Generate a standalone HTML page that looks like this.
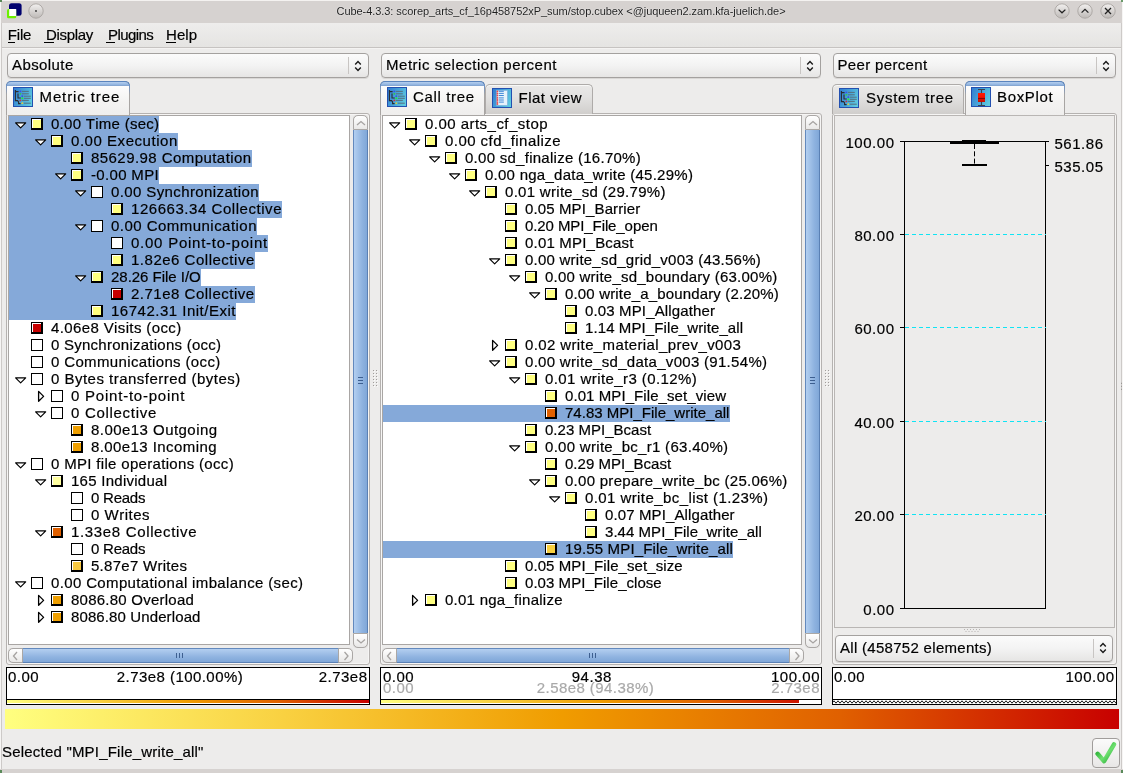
<!DOCTYPE html><html><head><meta charset="utf-8"><style>
html,body{margin:0;padding:0;width:1123px;height:773px;overflow:hidden;background:#edeceb}
body{position:relative;font-family:"Liberation Sans",sans-serif}
span{font-kerning:none;-webkit-text-stroke:0.2px currentColor}
#tx{position:absolute;left:0;top:0;width:1123px;height:773px;will-change:transform}
</style></head><body>














<div style="position:absolute;left:0;top:0;width:1123px;height:773px;background:#edeceb"></div>
<div style="position:absolute;left:0px;top:0px;width:1123px;height:23px;background:#d6d2d0"></div>
<div style="position:absolute;left:0px;top:0px;width:1123px;height:1px;background:#f4f2f0"></div>
<div style="position:absolute;left:0px;top:0px;width:1px;height:773px;background:#f6f5f4"></div>
<div style="position:absolute;left:1px;top:23px;width:1px;height:750px;background:#cdcac8"></div>
<div style="position:absolute;left:1121px;top:23px;width:1px;height:750px;background:#cdcac8"></div>
<div style="position:absolute;left:1122px;top:0px;width:1px;height:773px;background:#f6f5f4"></div>
<div style="position:absolute;left:0px;top:769px;width:1123px;height:4px;background:#d6d2d0"></div>
<div style="position:absolute;left:0px;top:770px;width:2px;height:3px;background:#5a8a5a"></div>
<div style="position:absolute;left:0px;top:0px;width:2px;height:2px;background:#5a8a5a"></div>
<div style="position:absolute;left:1121px;top:770px;width:2px;height:3px;background:#5a8a5a"></div>
<div style="position:absolute;left:1121px;top:0px;width:2px;height:2px;background:#6a9a6a"></div>
<svg style="position:absolute;left:5px;top:2px" width="18" height="18"><rect x="4" y="1.2" width="12.6" height="12.6" rx="2.5" fill="#00006e"/><rect x="2" y="7" width="9.2" height="9.2" rx="1.5" fill="#6cf000"/><rect x="4.2" y="7" width="7" height="7" fill="#fff"/></svg>
<svg style="position:absolute;left:27.4px;top:1.5999999999999996px" width="18" height="18"><defs><linearGradient id="g36" x1="0" y1="0" x2="0" y2="1"><stop offset="0" stop-color="#f2f0ef"/><stop offset="1" stop-color="#bdb9b6"/></linearGradient></defs><circle cx="9" cy="9" r="7.2" fill="url(#g36)" stroke="#a9a5a2" stroke-width="0.9"/><circle cx="9" cy="9" r="0.9" fill="#333"/></svg>
<svg style="position:absolute;left:1053.4px;top:1.5999999999999996px" width="18" height="18"><defs><linearGradient id="g1062" x1="0" y1="0" x2="0" y2="1"><stop offset="0" stop-color="#f2f0ef"/><stop offset="1" stop-color="#bdb9b6"/></linearGradient></defs><circle cx="9" cy="9" r="7.2" fill="url(#g1062)" stroke="#a9a5a2" stroke-width="0.9"/><path d="M5.6 7.6 L9 10.8 L12.4 7.6" fill="none" stroke="#222" stroke-width="1.3"/></svg>
<svg style="position:absolute;left:1076.4px;top:1.5999999999999996px" width="18" height="18"><defs><linearGradient id="g1085" x1="0" y1="0" x2="0" y2="1"><stop offset="0" stop-color="#f2f0ef"/><stop offset="1" stop-color="#bdb9b6"/></linearGradient></defs><circle cx="9" cy="9" r="7.2" fill="url(#g1085)" stroke="#a9a5a2" stroke-width="0.9"/><path d="M5.6 10.6 L9 7.4 L12.4 10.6" fill="none" stroke="#222" stroke-width="1.3"/></svg>
<svg style="position:absolute;left:1099.4px;top:1.5999999999999996px" width="18" height="18"><defs><linearGradient id="g1108" x1="0" y1="0" x2="0" y2="1"><stop offset="0" stop-color="#f2f0ef"/><stop offset="1" stop-color="#bdb9b6"/></linearGradient></defs><circle cx="9" cy="9" r="7.2" fill="url(#g1108)" stroke="#a9a5a2" stroke-width="0.9"/><path d="M6 6 L12 12 M12 6 L6 12" fill="none" stroke="#222" stroke-width="1.3"/></svg>
<div style="position:absolute;left:2px;top:23px;width:1119px;height:24px;background:linear-gradient(#eeedec,#e5e4e2)"></div>
<div style="position:absolute;left:2px;top:47px;width:1119px;height:1px;background:#c6c3c1"></div>
<div style="position:absolute;left:2px;top:48px;width:1119px;height:1px;background:#f4f3f2"></div>
<div style="position:absolute;left:8px;top:42px;width:7px;height:1px;background:#000"></div>
<div style="position:absolute;left:44px;top:42px;width:10px;height:1px;background:#000"></div>
<div style="position:absolute;left:106px;top:42px;width:9px;height:1px;background:#000"></div>
<div style="position:absolute;left:166px;top:42px;width:10px;height:1px;background:#000"></div>
<div style="position:absolute;left:7px;top:53px;width:360px;height:23px;border:1px solid #a4a19f;border-radius:4px;background:linear-gradient(#fbfbfb,#f3f3f3 50%,#e6e5e4);box-shadow:0 1px 0 #d9d7d5"></div>
<div style="position:absolute;left:348px;top:57px;width:1px;height:17px;background:#c8c5c3"></div>
<svg style="position:absolute;left:353px;top:60px" width="10" height="12"><path d="M2.2 4.4 L5 1.6 L7.8 4.4 M2.2 7.6 L5 10.4 L7.8 7.6" fill="none" stroke="#1a1a1a" stroke-width="1.45"/></svg>
<div style="position:absolute;left:381px;top:53px;width:438px;height:23px;border:1px solid #a4a19f;border-radius:4px;background:linear-gradient(#fbfbfb,#f3f3f3 50%,#e6e5e4);box-shadow:0 1px 0 #d9d7d5"></div>
<div style="position:absolute;left:800px;top:57px;width:1px;height:17px;background:#c8c5c3"></div>
<svg style="position:absolute;left:805px;top:60px" width="10" height="12"><path d="M2.2 4.4 L5 1.6 L7.8 4.4 M2.2 7.6 L5 10.4 L7.8 7.6" fill="none" stroke="#1a1a1a" stroke-width="1.45"/></svg>
<div style="position:absolute;left:833px;top:53px;width:281px;height:23px;border:1px solid #a4a19f;border-radius:4px;background:linear-gradient(#fbfbfb,#f3f3f3 50%,#e6e5e4);box-shadow:0 1px 0 #d9d7d5"></div>
<div style="position:absolute;left:1096px;top:57px;width:1px;height:17px;background:#c8c5c3"></div>
<svg style="position:absolute;left:1101px;top:60px" width="10" height="12"><path d="M2.2 4.4 L5 1.6 L7.8 4.4 M2.2 7.6 L5 10.4 L7.8 7.6" fill="none" stroke="#1a1a1a" stroke-width="1.45"/></svg>
<div style="position:absolute;left:6px;top:113px;width:362px;height:550px;border:1px solid #b5b2b0;border-radius:3px;box-shadow:inset 0 0 0 1px #f6f5f4"></div>
<div style="position:absolute;left:380px;top:113px;width:440px;height:550px;border:1px solid #b5b2b0;border-radius:3px;box-shadow:inset 0 0 0 1px #f6f5f4"></div>
<div style="position:absolute;left:832px;top:113px;width:283px;height:550px;border:1px solid #b5b2b0;border-radius:3px;box-shadow:inset 0 0 0 1px #f6f5f4"></div>
<div style="position:absolute;left:6px;top:81px;width:122px;height:33px;border:1px solid #a8a5a3;border-bottom:none;border-radius:5px 5px 0 0;background:linear-gradient(#ffffff,#f4f3f2 60%,#efeeed)"></div>
<div style="position:absolute;left:6px;top:81px;width:122px;height:3px;border:1px solid #5a84bd;border-bottom-color:#86a7d2;border-radius:5px 5px 0 0;background:linear-gradient(#b5cfee,#8db1df)"></div>
<div style="position:absolute;left:6px;top:85px;width:1px;height:10px;background:linear-gradient(#6a90c6,#a8a5a3)"></div>
<div style="position:absolute;left:129px;top:85px;width:1px;height:10px;background:linear-gradient(#6a90c6,#a8a5a3)"></div>
<svg style="position:absolute;left:13px;top:87px" width="20" height="20"><defs><linearGradient id="it13" x1="0" y1="0.3" x2="1" y2="0.7"><stop offset="0" stop-color="#3482d2"/><stop offset="1" stop-color="#5fcbe0"/></linearGradient></defs>
<rect x="0.5" y="0.5" width="19" height="19" fill="url(#it13)" stroke="#2350b0"/>
<path d="M2.4 3 V13.6 H4.6 L5.6 15 V16.6 H7.6 M2.4 4.6 H5.6 M5 6.6 V11 H7.8" fill="none" stroke="#2b2b30" stroke-width="1.1"/>
<path d="M8.8 4.4 H15.8 M8.8 6.8 H15.8 M10.8 9.2 H17.8 M10.8 11.3 H17.8 M8.8 13.4 H15.8 M10.8 16.2 H17.8" stroke="#56707e" stroke-width="1"/>
<circle cx="7.3" cy="4.4" r="0.9" fill="#3a50e8"/><circle cx="7.3" cy="6.8" r="0.9" fill="#30d040"/><circle cx="9.3" cy="9.2" r="0.9" fill="#3a50e8"/><circle cx="9.3" cy="11.3" r="1" fill="#20f030"/><circle cx="7.3" cy="13.4" r="0.9" fill="#d03040"/><circle cx="9.3" cy="16.2" r="0.9" fill="#e0d030"/></svg>
<div style="position:absolute;left:380px;top:81px;width:103px;height:33px;border:1px solid #a8a5a3;border-bottom:none;border-radius:5px 5px 0 0;background:linear-gradient(#ffffff,#f4f3f2 60%,#efeeed)"></div>
<div style="position:absolute;left:380px;top:81px;width:103px;height:3px;border:1px solid #5a84bd;border-bottom-color:#86a7d2;border-radius:5px 5px 0 0;background:linear-gradient(#b5cfee,#8db1df)"></div>
<div style="position:absolute;left:380px;top:85px;width:1px;height:10px;background:linear-gradient(#6a90c6,#a8a5a3)"></div>
<div style="position:absolute;left:484px;top:85px;width:1px;height:10px;background:linear-gradient(#6a90c6,#a8a5a3)"></div>
<svg style="position:absolute;left:387px;top:87px" width="20" height="20"><defs><linearGradient id="it387" x1="0" y1="0.3" x2="1" y2="0.7"><stop offset="0" stop-color="#3482d2"/><stop offset="1" stop-color="#5fcbe0"/></linearGradient></defs>
<rect x="0.5" y="0.5" width="19" height="19" fill="url(#it387)" stroke="#2350b0"/>
<path d="M2.4 3 V13.6 H4.6 L5.6 15 V16.6 H7.6 M2.4 4.6 H5.6 M5 6.6 V11 H7.8" fill="none" stroke="#2b2b30" stroke-width="1.1"/>
<path d="M8.8 4.4 H15.8 M8.8 6.8 H15.8 M10.8 9.2 H17.8 M10.8 11.3 H17.8 M8.8 13.4 H15.8 M10.8 16.2 H17.8" stroke="#56707e" stroke-width="1"/>
<circle cx="7.3" cy="4.4" r="0.9" fill="#3a50e8"/><circle cx="7.3" cy="6.8" r="0.9" fill="#30d040"/><circle cx="9.3" cy="9.2" r="0.9" fill="#3a50e8"/><circle cx="9.3" cy="11.3" r="1" fill="#20f030"/><circle cx="7.3" cy="13.4" r="0.9" fill="#d03040"/><circle cx="9.3" cy="16.2" r="0.9" fill="#e0d030"/></svg>
<div style="position:absolute;left:485px;top:84px;width:106px;height:29px;border:1px solid #aeaba9;border-bottom:none;border-radius:5px 5px 0 0;background:linear-gradient(#e9e8e7,#e3e2e1 40%,#d0cecc);box-shadow:inset 0 1px 0 #f8f8f7"></div>
<svg style="position:absolute;left:492px;top:88px" width="20" height="20"><defs><linearGradient id="if492" x1="0" y1="0.3" x2="1" y2="0.7"><stop offset="0" stop-color="#3482d2"/><stop offset="1" stop-color="#5fcbe0"/></linearGradient></defs>
<rect x="0.5" y="0.5" width="19" height="19" fill="url(#if492)" stroke="#2350b0"/>
<rect x="4.6" y="2.4" width="10.8" height="15" fill="#e6f2fb" stroke="#7fb0de" stroke-width="0.6"/>
<path d="M6.8 3.3 H11.8 M6.8 5.4 H11.8 M6.8 7.5 H11.8 M6.8 9.9 H11.8 M6.8 12 H11.8 M6.8 14.1 H11.8" stroke="#3f88d8" stroke-width="1"/>
<g fill="#f04848"><circle cx="5.4" cy="3.3" r="0.9"/><circle cx="5.4" cy="5.4" r="0.9"/><circle cx="5.4" cy="7.5" r="0.9"/><circle cx="5.4" cy="9.9" r="0.9"/><circle cx="5.4" cy="12" r="0.9"/><circle cx="5.4" cy="14.1" r="0.9"/><circle cx="5.4" cy="16" r="0.9"/></g></svg>
<div style="position:absolute;left:832px;top:84px;width:130px;height:29px;border:1px solid #aeaba9;border-bottom:none;border-radius:5px 5px 0 0;background:linear-gradient(#e9e8e7,#e3e2e1 40%,#d0cecc);box-shadow:inset 0 1px 0 #f8f8f7"></div>
<svg style="position:absolute;left:839px;top:88px" width="20" height="20"><defs><linearGradient id="it839" x1="0" y1="0.3" x2="1" y2="0.7"><stop offset="0" stop-color="#3482d2"/><stop offset="1" stop-color="#5fcbe0"/></linearGradient></defs>
<rect x="0.5" y="0.5" width="19" height="19" fill="url(#it839)" stroke="#2350b0"/>
<path d="M2.4 3 V13.6 H4.6 L5.6 15 V16.6 H7.6 M2.4 4.6 H5.6 M5 6.6 V11 H7.8" fill="none" stroke="#2b2b30" stroke-width="1.1"/>
<path d="M8.8 4.4 H15.8 M8.8 6.8 H15.8 M10.8 9.2 H17.8 M10.8 11.3 H17.8 M8.8 13.4 H15.8 M10.8 16.2 H17.8" stroke="#56707e" stroke-width="1"/>
<circle cx="7.3" cy="4.4" r="0.9" fill="#3a50e8"/><circle cx="7.3" cy="6.8" r="0.9" fill="#30d040"/><circle cx="9.3" cy="9.2" r="0.9" fill="#3a50e8"/><circle cx="9.3" cy="11.3" r="1" fill="#20f030"/><circle cx="7.3" cy="13.4" r="0.9" fill="#d03040"/><circle cx="9.3" cy="16.2" r="0.9" fill="#e0d030"/></svg>
<div style="position:absolute;left:965px;top:81px;width:98px;height:33px;border:1px solid #a8a5a3;border-bottom:none;border-radius:5px 5px 0 0;background:linear-gradient(#ffffff,#f4f3f2 60%,#efeeed)"></div>
<div style="position:absolute;left:965px;top:81px;width:98px;height:3px;border:1px solid #5a84bd;border-bottom-color:#86a7d2;border-radius:5px 5px 0 0;background:linear-gradient(#b5cfee,#8db1df)"></div>
<div style="position:absolute;left:965px;top:85px;width:1px;height:10px;background:linear-gradient(#6a90c6,#a8a5a3)"></div>
<div style="position:absolute;left:1064px;top:85px;width:1px;height:10px;background:linear-gradient(#6a90c6,#a8a5a3)"></div>
<svg style="position:absolute;left:971px;top:87px" width="20" height="20"><defs><linearGradient id="ib971" x1="0" y1="0.3" x2="1" y2="0.7"><stop offset="0" stop-color="#3482d2"/><stop offset="1" stop-color="#5fcbe0"/></linearGradient><linearGradient id="ibr971" x1="0" y1="0" x2="0" y2="1"><stop offset="0" stop-color="#ff1a00"/><stop offset="0.6" stop-color="#f01000"/><stop offset="1" stop-color="#c01000"/></linearGradient></defs>
<rect x="0.5" y="0.5" width="19" height="19" fill="url(#ib971)" stroke="#2350b0"/>
<path d="M7 2.5 H14 M10.5 2.5 V6 M10.5 15 V18.5 M7 18.5 H14" stroke="#3a4450" stroke-width="1.1"/>
<rect x="7" y="6" width="7" height="9" fill="url(#ibr971)"/>
<path d="M7 11.5 H14" stroke="#8a0800" stroke-width="1.2"/></svg>
<div style="position:absolute;left:8px;top:115px;width:340px;height:528px;border:1px solid #a9a6a4;background:#fff;overflow:hidden"></div>
<div style="position:absolute;left:382px;top:115px;width:418px;height:528px;border:1px solid #a9a6a4;background:#fff;overflow:hidden"></div>
<div style="position:absolute;left:353px;top:115px;width:15px;height:533px;border-radius:4px;background:#dcdad8"></div>
<div style="position:absolute;left:353px;top:130px;width:15px;height:503px;background:linear-gradient(90deg,#6389bd 0,#6389bd 1px,#b3cff0 1px,#8fb3e0 60%,#80a7d8 calc(100% - 1px),#5a80b4 calc(100% - 1px))"></div>
<div style="position:absolute;left:353px;top:115px;width:13px;height:13px;border:1px solid #aaa7a5;border-radius:5px 5px 0 0;background:linear-gradient(#ffffff,#e9e8e7)"></div>
<div style="position:absolute;left:353px;top:633px;width:13px;height:13px;border:1px solid #aaa7a5;border-radius:0 0 5px 5px;background:linear-gradient(#ffffff,#e9e8e7)"></div>
<svg style="position:absolute;left:356px;top:120px" width="10" height="7"><path d="M1 5 L5 1.5 L9 5" fill="none" stroke="#a6a3a1" stroke-width="1.3"/></svg>
<svg style="position:absolute;left:356px;top:638px" width="10" height="7"><path d="M1 1.5 L5 5 L9 1.5" fill="none" stroke="#a6a3a1" stroke-width="1.3"/></svg>
<div style="position:absolute;left:358px;top:377px;width:5px;height:1.4px;background:#3d5f90"></div>
<div style="position:absolute;left:358px;top:380px;width:5px;height:1.4px;background:#3d5f90"></div>
<div style="position:absolute;left:358px;top:383px;width:5px;height:1.4px;background:#3d5f90"></div>
<div style="position:absolute;left:8px;top:648px;width:345px;height:15px;border-radius:4px;background:#dcdad8"></div>
<div style="position:absolute;left:22px;top:648px;width:317px;height:15px;background:linear-gradient(#6389bd 0,#6389bd 1px,#b3cff0 1px,#8fb3e0 60%,#80a7d8 calc(100% - 1px),#5a80b4 calc(100% - 1px))"></div>
<div style="position:absolute;left:8px;top:648px;width:13px;height:13px;border:1px solid #aaa7a5;border-radius:5px 0 0 5px;background:linear-gradient(#ffffff,#e9e8e7)"></div>
<div style="position:absolute;left:338px;top:648px;width:13px;height:13px;border:1px solid #aaa7a5;border-radius:0 5px 5px 0;background:linear-gradient(#ffffff,#e9e8e7)"></div>
<svg style="position:absolute;left:12px;top:651px" width="7" height="10"><path d="M5 1 L1.5 5 L5 9" fill="none" stroke="#a6a3a1" stroke-width="1.3"/></svg>
<svg style="position:absolute;left:343px;top:651px" width="7" height="10"><path d="M1.5 1 L5 5 L1.5 9" fill="none" stroke="#a6a3a1" stroke-width="1.3"/></svg>
<div style="position:absolute;left:176px;top:653px;width:1.4px;height:5px;background:#3d5f90"></div>
<div style="position:absolute;left:179px;top:653px;width:1.4px;height:5px;background:#3d5f90"></div>
<div style="position:absolute;left:182px;top:653px;width:1.4px;height:5px;background:#3d5f90"></div>
<div style="position:absolute;left:805px;top:115px;width:15px;height:533px;border-radius:4px;background:#dcdad8"></div>
<div style="position:absolute;left:805px;top:130px;width:15px;height:503px;background:linear-gradient(90deg,#6389bd 0,#6389bd 1px,#b3cff0 1px,#8fb3e0 60%,#80a7d8 calc(100% - 1px),#5a80b4 calc(100% - 1px))"></div>
<div style="position:absolute;left:805px;top:115px;width:13px;height:13px;border:1px solid #aaa7a5;border-radius:5px 5px 0 0;background:linear-gradient(#ffffff,#e9e8e7)"></div>
<div style="position:absolute;left:805px;top:633px;width:13px;height:13px;border:1px solid #aaa7a5;border-radius:0 0 5px 5px;background:linear-gradient(#ffffff,#e9e8e7)"></div>
<svg style="position:absolute;left:808px;top:120px" width="10" height="7"><path d="M1 5 L5 1.5 L9 5" fill="none" stroke="#a6a3a1" stroke-width="1.3"/></svg>
<svg style="position:absolute;left:808px;top:638px" width="10" height="7"><path d="M1 1.5 L5 5 L9 1.5" fill="none" stroke="#a6a3a1" stroke-width="1.3"/></svg>
<div style="position:absolute;left:810px;top:377px;width:5px;height:1.4px;background:#3d5f90"></div>
<div style="position:absolute;left:810px;top:380px;width:5px;height:1.4px;background:#3d5f90"></div>
<div style="position:absolute;left:810px;top:383px;width:5px;height:1.4px;background:#3d5f90"></div>
<div style="position:absolute;left:382px;top:648px;width:422px;height:15px;border-radius:4px;background:#dcdad8"></div>
<div style="position:absolute;left:396px;top:648px;width:394px;height:15px;background:linear-gradient(#6389bd 0,#6389bd 1px,#b3cff0 1px,#8fb3e0 60%,#80a7d8 calc(100% - 1px),#5a80b4 calc(100% - 1px))"></div>
<div style="position:absolute;left:382px;top:648px;width:13px;height:13px;border:1px solid #aaa7a5;border-radius:5px 0 0 5px;background:linear-gradient(#ffffff,#e9e8e7)"></div>
<div style="position:absolute;left:789px;top:648px;width:13px;height:13px;border:1px solid #aaa7a5;border-radius:0 5px 5px 0;background:linear-gradient(#ffffff,#e9e8e7)"></div>
<svg style="position:absolute;left:386px;top:651px" width="7" height="10"><path d="M5 1 L1.5 5 L5 9" fill="none" stroke="#a6a3a1" stroke-width="1.3"/></svg>
<svg style="position:absolute;left:794px;top:651px" width="7" height="10"><path d="M1.5 1 L5 5 L1.5 9" fill="none" stroke="#a6a3a1" stroke-width="1.3"/></svg>
<div style="position:absolute;left:589px;top:653px;width:1.4px;height:5px;background:#3d5f90"></div>
<div style="position:absolute;left:592px;top:653px;width:1.4px;height:5px;background:#3d5f90"></div>
<div style="position:absolute;left:595px;top:653px;width:1.4px;height:5px;background:#3d5f90"></div>
<div style="position:absolute;left:834px;top:115px;width:279px;height:511px;border:1px solid #b9b6b4;background:#edeceb"></div>
<div style="position:absolute;left:904px;top:141px;width:1px;height:468px;background:#000"></div>
<div style="position:absolute;left:1045px;top:141px;width:1px;height:468px;background:#000"></div>
<div style="position:absolute;left:904px;top:141px;width:142px;height:1px;background:#000"></div>
<div style="position:absolute;left:904px;top:608px;width:142px;height:1px;background:#000"></div>
<div style="position:absolute;left:900px;top:141px;width:4px;height:1px;background:#000"></div>
<div style="position:absolute;left:900px;top:234px;width:4px;height:1px;background:#000"></div>
<svg style="position:absolute;left:905px;top:234px" width="141" height="1"><path d="M0 0.5 H141" stroke="#10e4f4" stroke-width="1" stroke-dasharray="4 3"/></svg>
<div style="position:absolute;left:900px;top:327px;width:4px;height:1px;background:#000"></div>
<svg style="position:absolute;left:905px;top:327px" width="141" height="1"><path d="M0 0.5 H141" stroke="#10e4f4" stroke-width="1" stroke-dasharray="4 3"/></svg>
<div style="position:absolute;left:900px;top:421px;width:4px;height:1px;background:#000"></div>
<svg style="position:absolute;left:905px;top:421px" width="141" height="1"><path d="M0 0.5 H141" stroke="#10e4f4" stroke-width="1" stroke-dasharray="4 3"/></svg>
<div style="position:absolute;left:900px;top:514px;width:4px;height:1px;background:#000"></div>
<svg style="position:absolute;left:905px;top:514px" width="141" height="1"><path d="M0 0.5 H141" stroke="#10e4f4" stroke-width="1" stroke-dasharray="4 3"/></svg>
<div style="position:absolute;left:900px;top:608px;width:4px;height:1px;background:#000"></div>
<div style="position:absolute;left:1046px;top:141px;width:3px;height:1px;background:#000"></div>
<div style="position:absolute;left:1046px;top:165px;width:3px;height:1px;background:#000"></div>
<div style="position:absolute;left:950px;top:141px;width:49px;height:3px;background:#000"></div>
<div style="position:absolute;left:962px;top:140px;width:24px;height:1px;background:#000"></div>
<svg style="position:absolute;left:974px;top:144px" width="1" height="21"><path d="M0.5 0 V21" stroke="#000" stroke-width="1" stroke-dasharray="5 2.3"/></svg>
<div style="position:absolute;left:962px;top:164px;width:25px;height:2px;background:#000"></div>
<svg style="position:absolute;left:964px;top:629px" width="20" height="4"><g fill="#b8b5b3"><rect x="0" y="0" width="1" height="1"/><rect x="3" y="0" width="1" height="1"/><rect x="6" y="0" width="1" height="1"/><rect x="9" y="0" width="1" height="1"/><rect x="12" y="0" width="1" height="1"/><rect x="15" y="0" width="1" height="1"/><rect x="1.5" y="2" width="1" height="1"/><rect x="4.5" y="2" width="1" height="1"/><rect x="7.5" y="2" width="1" height="1"/><rect x="10.5" y="2" width="1" height="1"/><rect x="13.5" y="2" width="1" height="1"/></g></svg>
<div style="position:absolute;left:835px;top:635px;width:276px;height:25px;border:1px solid #a4a19f;border-radius:4px;background:linear-gradient(#fbfbfb,#f3f3f3 50%,#e6e5e4);box-shadow:0 1px 0 #d9d7d5"></div>
<div style="position:absolute;left:1093px;top:639px;width:1px;height:19px;background:#c8c5c3"></div>
<svg style="position:absolute;left:1098px;top:642px" width="10" height="12"><path d="M2.2 4.4 L5 1.6 L7.8 4.4 M2.2 7.6 L5 10.4 L7.8 7.6" fill="none" stroke="#1a1a1a" stroke-width="1.45"/></svg>
<svg style="position:absolute;left:373px;top:370px" width="6" height="19"><g fill="#fbfbfa"><rect x="1" y="1" width="1" height="1"/><rect x="4" y="1" width="1" height="1"/><rect x="1" y="4" width="1" height="1"/><rect x="4" y="4" width="1" height="1"/><rect x="1" y="7" width="1" height="1"/><rect x="4" y="7" width="1" height="1"/><rect x="1" y="10" width="1" height="1"/><rect x="4" y="10" width="1" height="1"/><rect x="1" y="13" width="1" height="1"/><rect x="4" y="13" width="1" height="1"/><rect x="1" y="16" width="1" height="1"/><rect x="4" y="16" width="1" height="1"/></g><g fill="#a09d9b"><rect x="0" y="0" width="1" height="1"/><rect x="3" y="0" width="1" height="1"/><rect x="0" y="3" width="1" height="1"/><rect x="3" y="3" width="1" height="1"/><rect x="0" y="6" width="1" height="1"/><rect x="3" y="6" width="1" height="1"/><rect x="0" y="9" width="1" height="1"/><rect x="3" y="9" width="1" height="1"/><rect x="0" y="12" width="1" height="1"/><rect x="3" y="12" width="1" height="1"/><rect x="0" y="15" width="1" height="1"/><rect x="3" y="15" width="1" height="1"/></g></svg>
<svg style="position:absolute;left:825px;top:370px" width="6" height="19"><g fill="#fbfbfa"><rect x="1" y="1" width="1" height="1"/><rect x="4" y="1" width="1" height="1"/><rect x="1" y="4" width="1" height="1"/><rect x="4" y="4" width="1" height="1"/><rect x="1" y="7" width="1" height="1"/><rect x="4" y="7" width="1" height="1"/><rect x="1" y="10" width="1" height="1"/><rect x="4" y="10" width="1" height="1"/><rect x="1" y="13" width="1" height="1"/><rect x="4" y="13" width="1" height="1"/><rect x="1" y="16" width="1" height="1"/><rect x="4" y="16" width="1" height="1"/></g><g fill="#a09d9b"><rect x="0" y="0" width="1" height="1"/><rect x="3" y="0" width="1" height="1"/><rect x="0" y="3" width="1" height="1"/><rect x="3" y="3" width="1" height="1"/><rect x="0" y="6" width="1" height="1"/><rect x="3" y="6" width="1" height="1"/><rect x="0" y="9" width="1" height="1"/><rect x="3" y="9" width="1" height="1"/><rect x="0" y="12" width="1" height="1"/><rect x="3" y="12" width="1" height="1"/><rect x="0" y="15" width="1" height="1"/><rect x="3" y="15" width="1" height="1"/></g></svg>
<svg style="position:absolute;left:1121px;top:382px" width="2" height="10"><g fill="#8d8a88"><rect x="0" y="0.8" width="1" height="1"/><rect x="0" y="3.8" width="1" height="1"/><rect x="0" y="6.8" width="1" height="1"/></g></svg>
<div style="position:absolute;left:6px;top:667px;width:362px;height:36px;border:1px solid #000;background:#fff"></div>
<div style="position:absolute;left:7px;top:699px;width:362px;height:1px;background:#000"></div>
<div style="position:absolute;left:7px;top:700px;width:362px;height:3px;background:linear-gradient(90deg,#ffff80,#f9d141 25%,#f09c00 50%,#e06000 75%,#c80000)"></div>
<div style="position:absolute;left:380px;top:667px;width:440px;height:36px;border:1px solid #000;background:#fff"></div>
<div style="position:absolute;left:381px;top:699px;width:440px;height:1px;background:#000"></div>
<div style="position:absolute;left:381px;top:700px;width:418px;height:3px;overflow:hidden"><div style="width:440px;height:3px;background:linear-gradient(90deg,#ffff80,#f9d141 25%,#f09c00 50%,#e06000 75%,#c80000)"></div></div>
<div style="position:absolute;left:832px;top:667px;width:283px;height:36px;border:1px solid #000;background:#fff"></div>
<div style="position:absolute;left:833px;top:699px;width:283px;height:1px;background:#000"></div>
<svg style="position:absolute;left:833px;top:699px" width="283" height="5"><defs><pattern id="zz" x="1" width="4" height="5" patternUnits="userSpaceOnUse"><path d="M-0.5 1.2 L2 4.2 L4.5 1.2" fill="none" stroke="#000" stroke-width="0.9"/></pattern></defs><rect width="283" height="5" fill="url(#zz)"/></svg>
<div style="position:absolute;left:5px;top:709px;width:1114px;height:20px;background:linear-gradient(90deg,#ffff80,#f9d141 25%,#f09c00 50%,#e06000 75%,#c80000)"></div>
<div style="position:absolute;left:1092px;top:738px;width:26px;height:28px;border:1px solid #a09d9b;border-radius:4px;background:linear-gradient(#fbfbfb,#e8e7e6)"></div>
<svg style="position:absolute;left:1094px;top:740px" width="24" height="26"><defs><linearGradient id="ck" x1="0" y1="0" x2="1" y2="1"><stop offset="0" stop-color="#0a9a1a"/><stop offset="0.55" stop-color="#6ee070"/><stop offset="1" stop-color="#20a830"/></linearGradient></defs><path d="M3.6 13.8 L10.1 21.2 L20 4.4" fill="none" stroke="url(#ck)" stroke-width="4.4" stroke-linecap="round" stroke-linejoin="round"/></svg>
<div style="position:absolute;left:9px;top:116px;width:149.6px;height:17px;background:#85a9d9"></div>
<div style="position:absolute;left:9px;top:133px;width:168.8px;height:17px;background:#85a9d9"></div>
<div style="position:absolute;left:9px;top:150px;width:242.6px;height:17px;background:#85a9d9"></div>
<div style="position:absolute;left:9px;top:167px;width:150.0px;height:17px;background:#85a9d9"></div>
<div style="position:absolute;left:9px;top:184px;width:249.9px;height:17px;background:#85a9d9"></div>
<div style="position:absolute;left:9px;top:201px;width:273.1px;height:17px;background:#85a9d9"></div>
<div style="position:absolute;left:9px;top:218px;width:248.0px;height:17px;background:#85a9d9"></div>
<div style="position:absolute;left:9px;top:235px;width:258.9px;height:17px;background:#85a9d9"></div>
<div style="position:absolute;left:9px;top:252px;width:245.8px;height:17px;background:#85a9d9"></div>
<div style="position:absolute;left:9px;top:269px;width:191.7px;height:17px;background:#85a9d9"></div>
<div style="position:absolute;left:9px;top:286px;width:245.7px;height:17px;background:#85a9d9"></div>
<div style="position:absolute;left:9px;top:303px;width:227.0px;height:17px;background:#85a9d9"></div>
<div style="position:absolute;left:383px;top:405px;width:346.5px;height:17px;background:#85a9d9"></div>
<div style="position:absolute;left:383px;top:541px;width:349.9px;height:17px;background:#85a9d9"></div>
<svg style="position:absolute;left:14px;top:121px" width="14" height="9"><path d="M1.6 1.8 L11.7 1.8 L6.65 6.9 Z" fill="#fff" stroke="#000" stroke-width="1.15" stroke-linejoin="round"/></svg>
<div style="position:absolute;left:31px;top:118px;width:9px;height:9px;background:#ffff80;border-left:1px solid #000;border-top:1px solid #000;border-right:2px solid #000;border-bottom:2px solid #000;box-shadow:inset 1px 1px 0 #fff"></div>
<svg style="position:absolute;left:34px;top:138px" width="14" height="9"><path d="M1.6 1.8 L11.7 1.8 L6.65 6.9 Z" fill="#fff" stroke="#000" stroke-width="1.15" stroke-linejoin="round"/></svg>
<div style="position:absolute;left:51px;top:135px;width:9px;height:9px;background:#ffff80;border-left:1px solid #000;border-top:1px solid #000;border-right:2px solid #000;border-bottom:2px solid #000;box-shadow:inset 1px 1px 0 #fff"></div>
<div style="position:absolute;left:71px;top:152px;width:9px;height:9px;background:#ffff80;border-left:1px solid #000;border-top:1px solid #000;border-right:2px solid #000;border-bottom:2px solid #000;box-shadow:inset 1px 1px 0 #fff"></div>
<svg style="position:absolute;left:54px;top:172px" width="14" height="9"><path d="M1.6 1.8 L11.7 1.8 L6.65 6.9 Z" fill="#fff" stroke="#000" stroke-width="1.15" stroke-linejoin="round"/></svg>
<div style="position:absolute;left:71px;top:169px;width:9px;height:9px;background:#ffff80;border-left:1px solid #000;border-top:1px solid #000;border-right:2px solid #000;border-bottom:2px solid #000;box-shadow:inset 1px 1px 0 #fff"></div>
<svg style="position:absolute;left:74px;top:189px" width="14" height="9"><path d="M1.6 1.8 L11.7 1.8 L6.65 6.9 Z" fill="#fff" stroke="#000" stroke-width="1.15" stroke-linejoin="round"/></svg>
<div style="position:absolute;left:91px;top:186px;width:10px;height:10px;background:#fff;border:1px solid #000"></div>
<div style="position:absolute;left:111px;top:203px;width:9px;height:9px;background:#ffff80;border-left:1px solid #000;border-top:1px solid #000;border-right:2px solid #000;border-bottom:2px solid #000;box-shadow:inset 1px 1px 0 #fff"></div>
<svg style="position:absolute;left:74px;top:223px" width="14" height="9"><path d="M1.6 1.8 L11.7 1.8 L6.65 6.9 Z" fill="#fff" stroke="#000" stroke-width="1.15" stroke-linejoin="round"/></svg>
<div style="position:absolute;left:91px;top:220px;width:10px;height:10px;background:#fff;border:1px solid #000"></div>
<div style="position:absolute;left:111px;top:237px;width:10px;height:10px;background:#fff;border:1px solid #000"></div>
<div style="position:absolute;left:111px;top:254px;width:9px;height:9px;background:#ffff80;border-left:1px solid #000;border-top:1px solid #000;border-right:2px solid #000;border-bottom:2px solid #000;box-shadow:inset 1px 1px 0 #fff"></div>
<svg style="position:absolute;left:74px;top:274px" width="14" height="9"><path d="M1.6 1.8 L11.7 1.8 L6.65 6.9 Z" fill="#fff" stroke="#000" stroke-width="1.15" stroke-linejoin="round"/></svg>
<div style="position:absolute;left:91px;top:271px;width:9px;height:9px;background:#ffff80;border-left:1px solid #000;border-top:1px solid #000;border-right:2px solid #000;border-bottom:2px solid #000;box-shadow:inset 1px 1px 0 #fff"></div>
<div style="position:absolute;left:111px;top:288px;width:9px;height:9px;background:#c80000;border-left:1px solid #000;border-top:1px solid #000;border-right:2px solid #000;border-bottom:2px solid #000;box-shadow:inset 1px 1px 0 #fff"></div>
<div style="position:absolute;left:91px;top:305px;width:9px;height:9px;background:#ffff80;border-left:1px solid #000;border-top:1px solid #000;border-right:2px solid #000;border-bottom:2px solid #000;box-shadow:inset 1px 1px 0 #fff"></div>
<div style="position:absolute;left:31px;top:322px;width:9px;height:9px;background:#c80000;border-left:1px solid #000;border-top:1px solid #000;border-right:2px solid #000;border-bottom:2px solid #000;box-shadow:inset 1px 1px 0 #fff"></div>
<div style="position:absolute;left:31px;top:339px;width:10px;height:10px;background:#fff;border:1px solid #000"></div>
<div style="position:absolute;left:31px;top:356px;width:10px;height:10px;background:#fff;border:1px solid #000"></div>
<svg style="position:absolute;left:14px;top:376px" width="14" height="9"><path d="M1.6 1.8 L11.7 1.8 L6.65 6.9 Z" fill="#fff" stroke="#000" stroke-width="1.15" stroke-linejoin="round"/></svg>
<div style="position:absolute;left:31px;top:373px;width:10px;height:10px;background:#fff;border:1px solid #000"></div>
<svg style="position:absolute;left:37px;top:390px" width="10" height="14"><path d="M1.6 1.4 L1.6 11.3 L6.6 6.35 Z" fill="#fff" stroke="#000" stroke-width="1.3" stroke-linejoin="round"/></svg>
<div style="position:absolute;left:51px;top:390px;width:10px;height:10px;background:#fff;border:1px solid #000"></div>
<svg style="position:absolute;left:34px;top:410px" width="14" height="9"><path d="M1.6 1.8 L11.7 1.8 L6.65 6.9 Z" fill="#fff" stroke="#000" stroke-width="1.15" stroke-linejoin="round"/></svg>
<div style="position:absolute;left:51px;top:407px;width:10px;height:10px;background:#fff;border:1px solid #000"></div>
<div style="position:absolute;left:71px;top:424px;width:9px;height:9px;background:#f0a000;border-left:1px solid #000;border-top:1px solid #000;border-right:2px solid #000;border-bottom:2px solid #000;box-shadow:inset 1px 1px 0 #fff"></div>
<div style="position:absolute;left:71px;top:441px;width:9px;height:9px;background:#f0a000;border-left:1px solid #000;border-top:1px solid #000;border-right:2px solid #000;border-bottom:2px solid #000;box-shadow:inset 1px 1px 0 #fff"></div>
<svg style="position:absolute;left:14px;top:461px" width="14" height="9"><path d="M1.6 1.8 L11.7 1.8 L6.65 6.9 Z" fill="#fff" stroke="#000" stroke-width="1.15" stroke-linejoin="round"/></svg>
<div style="position:absolute;left:31px;top:458px;width:10px;height:10px;background:#fff;border:1px solid #000"></div>
<svg style="position:absolute;left:34px;top:478px" width="14" height="9"><path d="M1.6 1.8 L11.7 1.8 L6.65 6.9 Z" fill="#fff" stroke="#000" stroke-width="1.15" stroke-linejoin="round"/></svg>
<div style="position:absolute;left:51px;top:475px;width:9px;height:9px;background:#ffffa0;border-left:1px solid #000;border-top:1px solid #000;border-right:2px solid #000;border-bottom:2px solid #000;box-shadow:inset 1px 1px 0 #fff"></div>
<div style="position:absolute;left:71px;top:492px;width:10px;height:10px;background:#fff;border:1px solid #000"></div>
<div style="position:absolute;left:71px;top:509px;width:10px;height:10px;background:#fff;border:1px solid #000"></div>
<svg style="position:absolute;left:34px;top:529px" width="14" height="9"><path d="M1.6 1.8 L11.7 1.8 L6.65 6.9 Z" fill="#fff" stroke="#000" stroke-width="1.15" stroke-linejoin="round"/></svg>
<div style="position:absolute;left:51px;top:526px;width:9px;height:9px;background:#e06000;border-left:1px solid #000;border-top:1px solid #000;border-right:2px solid #000;border-bottom:2px solid #000;box-shadow:inset 1px 1px 0 #fff"></div>
<div style="position:absolute;left:71px;top:543px;width:10px;height:10px;background:#fff;border:1px solid #000"></div>
<div style="position:absolute;left:71px;top:560px;width:9px;height:9px;background:#f8c840;border-left:1px solid #000;border-top:1px solid #000;border-right:2px solid #000;border-bottom:2px solid #000;box-shadow:inset 1px 1px 0 #fff"></div>
<svg style="position:absolute;left:14px;top:580px" width="14" height="9"><path d="M1.6 1.8 L11.7 1.8 L6.65 6.9 Z" fill="#fff" stroke="#000" stroke-width="1.15" stroke-linejoin="round"/></svg>
<div style="position:absolute;left:31px;top:577px;width:10px;height:10px;background:#fff;border:1px solid #000"></div>
<svg style="position:absolute;left:37px;top:594px" width="10" height="14"><path d="M1.6 1.4 L1.6 11.3 L6.6 6.35 Z" fill="#fff" stroke="#000" stroke-width="1.3" stroke-linejoin="round"/></svg>
<div style="position:absolute;left:51px;top:594px;width:9px;height:9px;background:#f0a000;border-left:1px solid #000;border-top:1px solid #000;border-right:2px solid #000;border-bottom:2px solid #000;box-shadow:inset 1px 1px 0 #fff"></div>
<svg style="position:absolute;left:37px;top:611px" width="10" height="14"><path d="M1.6 1.4 L1.6 11.3 L6.6 6.35 Z" fill="#fff" stroke="#000" stroke-width="1.3" stroke-linejoin="round"/></svg>
<div style="position:absolute;left:51px;top:611px;width:9px;height:9px;background:#f0a000;border-left:1px solid #000;border-top:1px solid #000;border-right:2px solid #000;border-bottom:2px solid #000;box-shadow:inset 1px 1px 0 #fff"></div>
<svg style="position:absolute;left:388px;top:121px" width="14" height="9"><path d="M1.6 1.8 L11.7 1.8 L6.65 6.9 Z" fill="#fff" stroke="#000" stroke-width="1.15" stroke-linejoin="round"/></svg>
<div style="position:absolute;left:405px;top:118px;width:9px;height:9px;background:#ffff80;border-left:1px solid #000;border-top:1px solid #000;border-right:2px solid #000;border-bottom:2px solid #000;box-shadow:inset 1px 1px 0 #fff"></div>
<svg style="position:absolute;left:408px;top:138px" width="14" height="9"><path d="M1.6 1.8 L11.7 1.8 L6.65 6.9 Z" fill="#fff" stroke="#000" stroke-width="1.15" stroke-linejoin="round"/></svg>
<div style="position:absolute;left:425px;top:135px;width:9px;height:9px;background:#ffff80;border-left:1px solid #000;border-top:1px solid #000;border-right:2px solid #000;border-bottom:2px solid #000;box-shadow:inset 1px 1px 0 #fff"></div>
<svg style="position:absolute;left:428px;top:155px" width="14" height="9"><path d="M1.6 1.8 L11.7 1.8 L6.65 6.9 Z" fill="#fff" stroke="#000" stroke-width="1.15" stroke-linejoin="round"/></svg>
<div style="position:absolute;left:445px;top:152px;width:9px;height:9px;background:#ffff80;border-left:1px solid #000;border-top:1px solid #000;border-right:2px solid #000;border-bottom:2px solid #000;box-shadow:inset 1px 1px 0 #fff"></div>
<svg style="position:absolute;left:448px;top:172px" width="14" height="9"><path d="M1.6 1.8 L11.7 1.8 L6.65 6.9 Z" fill="#fff" stroke="#000" stroke-width="1.15" stroke-linejoin="round"/></svg>
<div style="position:absolute;left:465px;top:169px;width:9px;height:9px;background:#ffff80;border-left:1px solid #000;border-top:1px solid #000;border-right:2px solid #000;border-bottom:2px solid #000;box-shadow:inset 1px 1px 0 #fff"></div>
<svg style="position:absolute;left:468px;top:189px" width="14" height="9"><path d="M1.6 1.8 L11.7 1.8 L6.65 6.9 Z" fill="#fff" stroke="#000" stroke-width="1.15" stroke-linejoin="round"/></svg>
<div style="position:absolute;left:485px;top:186px;width:9px;height:9px;background:#ffff80;border-left:1px solid #000;border-top:1px solid #000;border-right:2px solid #000;border-bottom:2px solid #000;box-shadow:inset 1px 1px 0 #fff"></div>
<div style="position:absolute;left:505px;top:203px;width:9px;height:9px;background:#ffff80;border-left:1px solid #000;border-top:1px solid #000;border-right:2px solid #000;border-bottom:2px solid #000;box-shadow:inset 1px 1px 0 #fff"></div>
<div style="position:absolute;left:505px;top:220px;width:9px;height:9px;background:#ffff80;border-left:1px solid #000;border-top:1px solid #000;border-right:2px solid #000;border-bottom:2px solid #000;box-shadow:inset 1px 1px 0 #fff"></div>
<div style="position:absolute;left:505px;top:237px;width:9px;height:9px;background:#ffff80;border-left:1px solid #000;border-top:1px solid #000;border-right:2px solid #000;border-bottom:2px solid #000;box-shadow:inset 1px 1px 0 #fff"></div>
<svg style="position:absolute;left:488px;top:257px" width="14" height="9"><path d="M1.6 1.8 L11.7 1.8 L6.65 6.9 Z" fill="#fff" stroke="#000" stroke-width="1.15" stroke-linejoin="round"/></svg>
<div style="position:absolute;left:505px;top:254px;width:9px;height:9px;background:#ffff80;border-left:1px solid #000;border-top:1px solid #000;border-right:2px solid #000;border-bottom:2px solid #000;box-shadow:inset 1px 1px 0 #fff"></div>
<svg style="position:absolute;left:508px;top:274px" width="14" height="9"><path d="M1.6 1.8 L11.7 1.8 L6.65 6.9 Z" fill="#fff" stroke="#000" stroke-width="1.15" stroke-linejoin="round"/></svg>
<div style="position:absolute;left:525px;top:271px;width:9px;height:9px;background:#ffff80;border-left:1px solid #000;border-top:1px solid #000;border-right:2px solid #000;border-bottom:2px solid #000;box-shadow:inset 1px 1px 0 #fff"></div>
<svg style="position:absolute;left:528px;top:291px" width="14" height="9"><path d="M1.6 1.8 L11.7 1.8 L6.65 6.9 Z" fill="#fff" stroke="#000" stroke-width="1.15" stroke-linejoin="round"/></svg>
<div style="position:absolute;left:545px;top:288px;width:9px;height:9px;background:#ffff80;border-left:1px solid #000;border-top:1px solid #000;border-right:2px solid #000;border-bottom:2px solid #000;box-shadow:inset 1px 1px 0 #fff"></div>
<div style="position:absolute;left:565px;top:305px;width:9px;height:9px;background:#ffff80;border-left:1px solid #000;border-top:1px solid #000;border-right:2px solid #000;border-bottom:2px solid #000;box-shadow:inset 1px 1px 0 #fff"></div>
<div style="position:absolute;left:565px;top:322px;width:9px;height:9px;background:#ffff80;border-left:1px solid #000;border-top:1px solid #000;border-right:2px solid #000;border-bottom:2px solid #000;box-shadow:inset 1px 1px 0 #fff"></div>
<svg style="position:absolute;left:491px;top:339px" width="10" height="14"><path d="M1.6 1.4 L1.6 11.3 L6.6 6.35 Z" fill="#fff" stroke="#000" stroke-width="1.3" stroke-linejoin="round"/></svg>
<div style="position:absolute;left:505px;top:339px;width:9px;height:9px;background:#ffff80;border-left:1px solid #000;border-top:1px solid #000;border-right:2px solid #000;border-bottom:2px solid #000;box-shadow:inset 1px 1px 0 #fff"></div>
<svg style="position:absolute;left:488px;top:359px" width="14" height="9"><path d="M1.6 1.8 L11.7 1.8 L6.65 6.9 Z" fill="#fff" stroke="#000" stroke-width="1.15" stroke-linejoin="round"/></svg>
<div style="position:absolute;left:505px;top:356px;width:9px;height:9px;background:#ffff80;border-left:1px solid #000;border-top:1px solid #000;border-right:2px solid #000;border-bottom:2px solid #000;box-shadow:inset 1px 1px 0 #fff"></div>
<svg style="position:absolute;left:508px;top:376px" width="14" height="9"><path d="M1.6 1.8 L11.7 1.8 L6.65 6.9 Z" fill="#fff" stroke="#000" stroke-width="1.15" stroke-linejoin="round"/></svg>
<div style="position:absolute;left:525px;top:373px;width:9px;height:9px;background:#ffff80;border-left:1px solid #000;border-top:1px solid #000;border-right:2px solid #000;border-bottom:2px solid #000;box-shadow:inset 1px 1px 0 #fff"></div>
<div style="position:absolute;left:545px;top:390px;width:9px;height:9px;background:#ffff80;border-left:1px solid #000;border-top:1px solid #000;border-right:2px solid #000;border-bottom:2px solid #000;box-shadow:inset 1px 1px 0 #fff"></div>
<div style="position:absolute;left:545px;top:407px;width:9px;height:9px;background:#e06000;border-left:1px solid #000;border-top:1px solid #000;border-right:2px solid #000;border-bottom:2px solid #000;box-shadow:inset 1px 1px 0 #fff"></div>
<div style="position:absolute;left:525px;top:424px;width:9px;height:9px;background:#ffff80;border-left:1px solid #000;border-top:1px solid #000;border-right:2px solid #000;border-bottom:2px solid #000;box-shadow:inset 1px 1px 0 #fff"></div>
<svg style="position:absolute;left:508px;top:444px" width="14" height="9"><path d="M1.6 1.8 L11.7 1.8 L6.65 6.9 Z" fill="#fff" stroke="#000" stroke-width="1.15" stroke-linejoin="round"/></svg>
<div style="position:absolute;left:525px;top:441px;width:9px;height:9px;background:#ffff80;border-left:1px solid #000;border-top:1px solid #000;border-right:2px solid #000;border-bottom:2px solid #000;box-shadow:inset 1px 1px 0 #fff"></div>
<div style="position:absolute;left:545px;top:458px;width:9px;height:9px;background:#ffff80;border-left:1px solid #000;border-top:1px solid #000;border-right:2px solid #000;border-bottom:2px solid #000;box-shadow:inset 1px 1px 0 #fff"></div>
<svg style="position:absolute;left:528px;top:478px" width="14" height="9"><path d="M1.6 1.8 L11.7 1.8 L6.65 6.9 Z" fill="#fff" stroke="#000" stroke-width="1.15" stroke-linejoin="round"/></svg>
<div style="position:absolute;left:545px;top:475px;width:9px;height:9px;background:#ffff80;border-left:1px solid #000;border-top:1px solid #000;border-right:2px solid #000;border-bottom:2px solid #000;box-shadow:inset 1px 1px 0 #fff"></div>
<svg style="position:absolute;left:548px;top:495px" width="14" height="9"><path d="M1.6 1.8 L11.7 1.8 L6.65 6.9 Z" fill="#fff" stroke="#000" stroke-width="1.15" stroke-linejoin="round"/></svg>
<div style="position:absolute;left:565px;top:492px;width:9px;height:9px;background:#ffff80;border-left:1px solid #000;border-top:1px solid #000;border-right:2px solid #000;border-bottom:2px solid #000;box-shadow:inset 1px 1px 0 #fff"></div>
<div style="position:absolute;left:585px;top:509px;width:9px;height:9px;background:#ffff80;border-left:1px solid #000;border-top:1px solid #000;border-right:2px solid #000;border-bottom:2px solid #000;box-shadow:inset 1px 1px 0 #fff"></div>
<div style="position:absolute;left:585px;top:526px;width:9px;height:9px;background:#ffff80;border-left:1px solid #000;border-top:1px solid #000;border-right:2px solid #000;border-bottom:2px solid #000;box-shadow:inset 1px 1px 0 #fff"></div>
<div style="position:absolute;left:545px;top:543px;width:9px;height:9px;background:#f8d040;border-left:1px solid #000;border-top:1px solid #000;border-right:2px solid #000;border-bottom:2px solid #000;box-shadow:inset 1px 1px 0 #fff"></div>
<div style="position:absolute;left:505px;top:560px;width:9px;height:9px;background:#ffff80;border-left:1px solid #000;border-top:1px solid #000;border-right:2px solid #000;border-bottom:2px solid #000;box-shadow:inset 1px 1px 0 #fff"></div>
<div style="position:absolute;left:505px;top:577px;width:9px;height:9px;background:#ffff80;border-left:1px solid #000;border-top:1px solid #000;border-right:2px solid #000;border-bottom:2px solid #000;box-shadow:inset 1px 1px 0 #fff"></div>
<svg style="position:absolute;left:411px;top:594px" width="10" height="14"><path d="M1.6 1.4 L1.6 11.3 L6.6 6.35 Z" fill="#fff" stroke="#000" stroke-width="1.3" stroke-linejoin="round"/></svg>
<div style="position:absolute;left:425px;top:594px;width:9px;height:9px;background:#ffff80;border-left:1px solid #000;border-top:1px solid #000;border-right:2px solid #000;border-bottom:2px solid #000;box-shadow:inset 1px 1px 0 #fff"></div>
<div id="tx"><span style="position:absolute;left:336.50px;top:5.69px;font-size:11px;line-height:11px;letter-spacing:-0.058px;color:#1e1e1e;white-space:pre;-webkit-text-stroke:0;text-shadow:0 0 1.5px #fff;">Cube-4.3.3: scorep_arts_cf_16p458752xP_sum/stop.cubex &lt;@juqueen2.zam.kfa-juelich.de&gt;</span>
<span style="position:absolute;left:7.70px;top:27.30px;font-size:15px;line-height:15px;letter-spacing:-0.143px;color:#000;white-space:pre;">File</span>
<span style="position:absolute;left:46.00px;top:27.30px;font-size:15px;line-height:15px;letter-spacing:-0.312px;color:#000;white-space:pre;">Display</span>
<span style="position:absolute;left:108.00px;top:27.30px;font-size:15px;line-height:15px;letter-spacing:-0.572px;color:#000;white-space:pre;">Plugins</span>
<span style="position:absolute;left:166.00px;top:27.30px;font-size:15px;line-height:15px;letter-spacing:0.085px;color:#000;white-space:pre;">Help</span>
<span style="position:absolute;left:12.00px;top:57.30px;font-size:15px;line-height:15px;letter-spacing:0.416px;color:#000;white-space:pre;">Absolute</span>
<span style="position:absolute;left:386.00px;top:57.30px;font-size:15px;line-height:15px;letter-spacing:0.524px;color:#000;white-space:pre;">Metric selection percent</span>
<span style="position:absolute;left:837.50px;top:57.30px;font-size:15px;line-height:15px;letter-spacing:0.342px;color:#000;white-space:pre;">Peer percent</span>
<span style="position:absolute;left:39.50px;top:89.30px;font-size:15px;line-height:15px;letter-spacing:0.889px;color:#000;white-space:pre;">Metric tree</span>
<span style="position:absolute;left:413.00px;top:89.30px;font-size:15px;line-height:15px;letter-spacing:0.655px;color:#000;white-space:pre;">Call tree</span>
<span style="position:absolute;left:518.50px;top:90.30px;font-size:15px;line-height:15px;letter-spacing:0.502px;color:#000;white-space:pre;">Flat view</span>
<span style="position:absolute;left:866.00px;top:90.30px;font-size:15px;line-height:15px;letter-spacing:0.709px;color:#000;white-space:pre;">System tree</span>
<span style="position:absolute;left:997.00px;top:89.30px;font-size:15px;line-height:15px;letter-spacing:0.674px;color:#000;white-space:pre;">BoxPlot</span>
<span style="position:absolute;left:845.50px;top:135.30px;font-size:15px;line-height:15px;letter-spacing:0.518px;color:#000;white-space:pre;">100.00</span>
<span style="position:absolute;left:854.41px;top:228.30px;font-size:15px;line-height:15px;letter-spacing:0.509px;color:#000;white-space:pre;">80.00</span>
<span style="position:absolute;left:854.41px;top:321.30px;font-size:15px;line-height:15px;letter-spacing:0.509px;color:#000;white-space:pre;">60.00</span>
<span style="position:absolute;left:854.41px;top:415.30px;font-size:15px;line-height:15px;letter-spacing:0.509px;color:#000;white-space:pre;">40.00</span>
<span style="position:absolute;left:854.41px;top:508.30px;font-size:15px;line-height:15px;letter-spacing:0.509px;color:#000;white-space:pre;">20.00</span>
<span style="position:absolute;left:863.33px;top:602.30px;font-size:15px;line-height:15px;letter-spacing:0.492px;color:#000;white-space:pre;">0.00</span>
<span style="position:absolute;left:1054.50px;top:136.30px;font-size:15px;line-height:15px;letter-spacing:0.518px;color:#000;white-space:pre;">561.86</span>
<span style="position:absolute;left:1054.50px;top:159.30px;font-size:15px;line-height:15px;letter-spacing:0.518px;color:#000;white-space:pre;">535.05</span>
<span style="position:absolute;left:840.00px;top:640.30px;font-size:15px;line-height:15px;letter-spacing:0.297px;color:#000;white-space:pre;">All (458752 elements)</span>
<span style="position:absolute;left:8.00px;top:669.30px;font-size:15px;line-height:15px;letter-spacing:0.492px;color:#000;white-space:pre;">0.00</span>
<span style="position:absolute;left:116.82px;top:669.30px;font-size:15px;line-height:15px;letter-spacing:0.443px;color:#000;white-space:pre;">2.73e8 (100.00%)</span>
<span style="position:absolute;left:318.80px;top:669.30px;font-size:15px;line-height:15px;letter-spacing:0.469px;color:#000;white-space:pre;">2.73e8</span>
<span style="position:absolute;left:383.00px;top:680.30px;font-size:15px;line-height:15px;letter-spacing:0.492px;color:#a9a9a9;white-space:pre;">0.00</span>
<span style="position:absolute;left:536.77px;top:680.30px;font-size:15px;line-height:15px;letter-spacing:0.435px;color:#a9a9a9;white-space:pre;">2.58e8 (94.38%)</span>
<span style="position:absolute;left:771.30px;top:680.30px;font-size:15px;line-height:15px;letter-spacing:0.469px;color:#a9a9a9;white-space:pre;">2.73e8</span>
<span style="position:absolute;left:383.00px;top:669.30px;font-size:15px;line-height:15px;letter-spacing:0.492px;color:#000;white-space:pre;">0.00</span>
<span style="position:absolute;left:571.75px;top:669.30px;font-size:15px;line-height:15px;letter-spacing:0.509px;color:#000;white-space:pre;">94.38</span>
<span style="position:absolute;left:771.00px;top:669.30px;font-size:15px;line-height:15px;letter-spacing:0.518px;color:#000;white-space:pre;">100.00</span>
<span style="position:absolute;left:834.00px;top:669.30px;font-size:15px;line-height:15px;letter-spacing:0.492px;color:#000;white-space:pre;">0.00</span>
<span style="position:absolute;left:1065.50px;top:669.30px;font-size:15px;line-height:15px;letter-spacing:0.518px;color:#000;white-space:pre;">100.00</span>
<span style="position:absolute;left:2.00px;top:744.30px;font-size:15px;line-height:15px;letter-spacing:0.204px;color:#000;white-space:pre;">Selected "MPI_File_write_all"</span>
<span style="position:absolute;left:51.00px;top:116.30px;font-size:15px;line-height:15px;letter-spacing:0.280px;color:#000;white-space:pre;">0.00 Time (sec)</span>
<span style="position:absolute;left:71.00px;top:133.30px;font-size:15px;line-height:15px;letter-spacing:0.541px;color:#000;white-space:pre;">0.00 Execution</span>
<span style="position:absolute;left:91.00px;top:150.30px;font-size:15px;line-height:15px;letter-spacing:0.440px;color:#000;white-space:pre;">85629.98 Computation</span>
<span style="position:absolute;left:91.00px;top:167.30px;font-size:15px;line-height:15px;letter-spacing:0.333px;color:#000;white-space:pre;">-0.00 MPI</span>
<span style="position:absolute;left:111.00px;top:184.30px;font-size:15px;line-height:15px;letter-spacing:0.389px;color:#000;white-space:pre;">0.00 Synchronization</span>
<span style="position:absolute;left:131.00px;top:201.30px;font-size:15px;line-height:15px;letter-spacing:0.548px;color:#000;white-space:pre;">126663.34 Collective</span>
<span style="position:absolute;left:111.00px;top:218.30px;font-size:15px;line-height:15px;letter-spacing:0.466px;color:#000;white-space:pre;">0.00 Communication</span>
<span style="position:absolute;left:131.00px;top:235.30px;font-size:15px;line-height:15px;letter-spacing:0.755px;color:#000;white-space:pre;">0.00 Point-to-point</span>
<span style="position:absolute;left:131.00px;top:252.30px;font-size:15px;line-height:15px;letter-spacing:0.511px;color:#000;white-space:pre;">1.82e6 Collective</span>
<span style="position:absolute;left:111.00px;top:269.30px;font-size:15px;line-height:15px;letter-spacing:-0.026px;color:#000;white-space:pre;">28.26 File I/O</span>
<span style="position:absolute;left:131.00px;top:286.30px;font-size:15px;line-height:15px;letter-spacing:0.505px;color:#000;white-space:pre;">2.71e8 Collective</span>
<span style="position:absolute;left:111.00px;top:303.30px;font-size:15px;line-height:15px;letter-spacing:0.502px;color:#000;white-space:pre;">16742.31 Init/Exit</span>
<span style="position:absolute;left:51.00px;top:320.30px;font-size:15px;line-height:15px;letter-spacing:0.378px;color:#000;white-space:pre;">4.06e8 Visits (occ)</span>
<span style="position:absolute;left:51.00px;top:337.30px;font-size:15px;line-height:15px;letter-spacing:0.253px;color:#000;white-space:pre;">0 Synchronizations (occ)</span>
<span style="position:absolute;left:51.00px;top:354.30px;font-size:15px;line-height:15px;letter-spacing:0.360px;color:#000;white-space:pre;">0 Communications (occ)</span>
<span style="position:absolute;left:51.00px;top:371.30px;font-size:15px;line-height:15px;letter-spacing:0.481px;color:#000;white-space:pre;">0 Bytes transferred (bytes)</span>
<span style="position:absolute;left:71.00px;top:388.30px;font-size:15px;line-height:15px;letter-spacing:0.776px;color:#000;white-space:pre;">0 Point-to-point</span>
<span style="position:absolute;left:71.00px;top:405.30px;font-size:15px;line-height:15px;letter-spacing:0.703px;color:#000;white-space:pre;">0 Collective</span>
<span style="position:absolute;left:91.00px;top:422.30px;font-size:15px;line-height:15px;letter-spacing:0.454px;color:#000;white-space:pre;">8.00e13 Outgoing</span>
<span style="position:absolute;left:91.00px;top:439.30px;font-size:15px;line-height:15px;letter-spacing:0.415px;color:#000;white-space:pre;">8.00e13 Incoming</span>
<span style="position:absolute;left:51.00px;top:456.30px;font-size:15px;line-height:15px;letter-spacing:0.323px;color:#000;white-space:pre;">0 MPI file operations (occ)</span>
<span style="position:absolute;left:71.00px;top:473.30px;font-size:15px;line-height:15px;letter-spacing:0.263px;color:#000;white-space:pre;">165 Individual</span>
<span style="position:absolute;left:91.00px;top:490.30px;font-size:15px;line-height:15px;letter-spacing:-0.233px;color:#000;white-space:pre;">0 Reads</span>
<span style="position:absolute;left:91.00px;top:507.30px;font-size:15px;line-height:15px;letter-spacing:0.499px;color:#000;white-space:pre;">0 Writes</span>
<span style="position:absolute;left:71.00px;top:524.30px;font-size:15px;line-height:15px;letter-spacing:0.658px;color:#000;white-space:pre;">1.33e8 Collective</span>
<span style="position:absolute;left:91.00px;top:541.30px;font-size:15px;line-height:15px;letter-spacing:-0.233px;color:#000;white-space:pre;">0 Reads</span>
<span style="position:absolute;left:91.00px;top:558.30px;font-size:15px;line-height:15px;letter-spacing:0.279px;color:#000;white-space:pre;">5.87e7 Writes</span>
<span style="position:absolute;left:51.00px;top:575.30px;font-size:15px;line-height:15px;letter-spacing:0.361px;color:#000;white-space:pre;">0.00 Computational imbalance (sec)</span>
<span style="position:absolute;left:71.00px;top:592.30px;font-size:15px;line-height:15px;letter-spacing:0.237px;color:#000;white-space:pre;">8086.80 Overload</span>
<span style="position:absolute;left:71.00px;top:609.30px;font-size:15px;line-height:15px;letter-spacing:0.114px;color:#000;white-space:pre;">8086.80 Underload</span>
<span style="position:absolute;left:425.00px;top:116.30px;font-size:15px;line-height:15px;letter-spacing:0.467px;color:#000;white-space:pre;">0.00 arts_cf_stop</span>
<span style="position:absolute;left:445.00px;top:133.30px;font-size:15px;line-height:15px;letter-spacing:0.444px;color:#000;white-space:pre;">0.00 cfd_finalize</span>
<span style="position:absolute;left:465.00px;top:150.30px;font-size:15px;line-height:15px;letter-spacing:0.268px;color:#000;white-space:pre;">0.00 sd_finalize (16.70%)</span>
<span style="position:absolute;left:485.00px;top:167.30px;font-size:15px;line-height:15px;letter-spacing:0.256px;color:#000;white-space:pre;">0.00 nga_data_write (45.29%)</span>
<span style="position:absolute;left:505.00px;top:184.30px;font-size:15px;line-height:15px;letter-spacing:0.296px;color:#000;white-space:pre;">0.01 write_sd (29.79%)</span>
<span style="position:absolute;left:525.00px;top:201.30px;font-size:15px;line-height:15px;letter-spacing:0.125px;color:#000;white-space:pre;">0.05 MPI_Barrier</span>
<span style="position:absolute;left:525.00px;top:218.30px;font-size:15px;line-height:15px;letter-spacing:-0.090px;color:#000;white-space:pre;">0.20 MPI_File_open</span>
<span style="position:absolute;left:525.00px;top:235.30px;font-size:15px;line-height:15px;letter-spacing:0.196px;color:#000;white-space:pre;">0.01 MPI_Bcast</span>
<span style="position:absolute;left:525.00px;top:252.30px;font-size:15px;line-height:15px;letter-spacing:0.234px;color:#000;white-space:pre;">0.00 write_sd_grid_v003 (43.56%)</span>
<span style="position:absolute;left:545.00px;top:269.30px;font-size:15px;line-height:15px;letter-spacing:0.236px;color:#000;white-space:pre;">0.00 write_sd_boundary (63.00%)</span>
<span style="position:absolute;left:565.00px;top:286.30px;font-size:15px;line-height:15px;letter-spacing:0.161px;color:#000;white-space:pre;">0.00 write_a_boundary (2.20%)</span>
<span style="position:absolute;left:585.00px;top:303.30px;font-size:15px;line-height:15px;letter-spacing:0.142px;color:#000;white-space:pre;">0.03 MPI_Allgather</span>
<span style="position:absolute;left:585.00px;top:320.30px;font-size:15px;line-height:15px;letter-spacing:0.098px;color:#000;white-space:pre;">1.14 MPI_File_write_all</span>
<span style="position:absolute;left:525.00px;top:337.30px;font-size:15px;line-height:15px;letter-spacing:0.382px;color:#000;white-space:pre;">0.02 write_material_prev_v003</span>
<span style="position:absolute;left:525.00px;top:354.30px;font-size:15px;line-height:15px;letter-spacing:0.302px;color:#000;white-space:pre;">0.00 write_sd_data_v003 (91.54%)</span>
<span style="position:absolute;left:545.00px;top:371.30px;font-size:15px;line-height:15px;letter-spacing:0.421px;color:#000;white-space:pre;">0.01 write_r3 (0.12%)</span>
<span style="position:absolute;left:565.00px;top:388.30px;font-size:15px;line-height:15px;letter-spacing:0.082px;color:#000;white-space:pre;">0.01 MPI_File_set_view</span>
<span style="position:absolute;left:565.00px;top:405.30px;font-size:15px;line-height:15px;letter-spacing:0.009px;color:#000;white-space:pre;">74.83 MPI_File_write_all</span>
<span style="position:absolute;left:545.00px;top:422.30px;font-size:15px;line-height:15px;letter-spacing:0.018px;color:#000;white-space:pre;">0.23 MPI_Bcast</span>
<span style="position:absolute;left:545.00px;top:439.30px;font-size:15px;line-height:15px;letter-spacing:0.296px;color:#000;white-space:pre;">0.00 write_bc_r1 (63.40%)</span>
<span style="position:absolute;left:565.00px;top:456.30px;font-size:15px;line-height:15px;letter-spacing:0.018px;color:#000;white-space:pre;">0.29 MPI_Bcast</span>
<span style="position:absolute;left:565.00px;top:473.30px;font-size:15px;line-height:15px;letter-spacing:0.278px;color:#000;white-space:pre;">0.00 prepare_write_bc (25.06%)</span>
<span style="position:absolute;left:585.00px;top:490.30px;font-size:15px;line-height:15px;letter-spacing:0.417px;color:#000;white-space:pre;">0.01 write_bc_list (1.23%)</span>
<span style="position:absolute;left:605.00px;top:507.30px;font-size:15px;line-height:15px;letter-spacing:0.119px;color:#000;white-space:pre;">0.07 MPI_Allgather</span>
<span style="position:absolute;left:605.00px;top:524.30px;font-size:15px;line-height:15px;letter-spacing:0.042px;color:#000;white-space:pre;">3.44 MPI_File_write_all</span>
<span style="position:absolute;left:565.00px;top:541.30px;font-size:15px;line-height:15px;letter-spacing:0.151px;color:#000;white-space:pre;">19.55 MPI_File_write_all</span>
<span style="position:absolute;left:525.00px;top:558.30px;font-size:15px;line-height:15px;letter-spacing:0.079px;color:#000;white-space:pre;">0.05 MPI_File_set_size</span>
<span style="position:absolute;left:525.00px;top:575.30px;font-size:15px;line-height:15px;letter-spacing:0.045px;color:#000;white-space:pre;">0.03 MPI_File_close</span>
<span style="position:absolute;left:445.00px;top:592.30px;font-size:15px;line-height:15px;letter-spacing:0.256px;color:#000;white-space:pre;">0.01 nga_finalize</span></div>
</body></html>
